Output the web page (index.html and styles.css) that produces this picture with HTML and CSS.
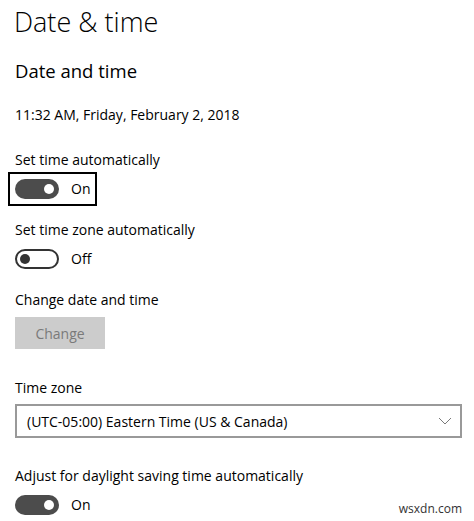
FILE: index.html
```html
<!DOCTYPE html>
<html lang="en">
<head>
    <meta charset="UTF-8">
    <meta name="viewport" content="width=device-width, initial-scale=1.0">
    <title>Date &amp; time</title>
    <link rel="stylesheet" href="styles.css">
</head>
<body>
    <div class="page">
        <h1>Date &amp; time</h1>
        <h2>Date and time</h2>

        <p class="now">11:32 AM, Friday, February 2, 2018</p>

        <div class="setting first">
            <p class="label">Set time automatically</p>
            <div class="toggle-row focused">
                <div class="toggle on"><span class="knob"></span></div>
                <span class="state">On</span>
            </div>
        </div>

        <div class="setting">
            <p class="label">Set time zone automatically</p>
            <div class="toggle-row">
                <div class="toggle off"><span class="knob"></span></div>
                <span class="state">Off</span>
            </div>
        </div>

        <div class="setting">
            <p class="label">Change date and time</p>
            <button class="btn" disabled>Change</button>
        </div>

        <div class="setting zone">
            <p class="label">Time zone</p>
            <div class="select">
                <span>(UTC-05:00) Eastern Time (US &amp; Canada)</span>
                <svg class="chevron" width="14" height="8" viewBox="0 0 14 8">
                    <path d="M1 1 L7 7 L13 1" fill="none" stroke="#7a7a7a" stroke-width="1"/>
                </svg>
            </div>
        </div>

        <div class="setting dst">
            <p class="label">Adjust for daylight saving time automatically</p>
            <div class="toggle-row">
                <div class="toggle on"><span class="knob"></span></div>
                <span class="state">On</span>
            </div>
        </div>
    </div>
    <div class="watermark">wsxdn.com</div>
</body>
</html>
```

FILE: styles.css
```css
body {
    margin: 0;
    padding: 0;
    background: #fff;
    color: #000;
    font-family: "Open Sans", "Noto Sans", sans-serif;
    overflow: hidden;
}

.page {
    padding: 0 12px 0 15px;
}

h1 {
    font-size: 27px;
    font-weight: 300;
    line-height: 40px;
    margin: 2px 0 0 -1px;
}

h2 {
    font-size: 18.5px;
    font-weight: 400;
    line-height: 28px;
    margin: 15px 0 0 0;
}

p {
    margin: 0;
}

.now {
    font-size: 14px;
    line-height: 20px;
    margin-top: 20px;
}

.setting {
    margin-top: 21px;
}

.setting.first {
    margin-top: 25px;
}

.setting.zone {
    margin-top: 29px;
}

.setting.dst {
    margin-top: 28px;
}

.label {
    font-size: 14px;
    line-height: 20px;
}

.toggle-row {
    display: flex;
    align-items: center;
    margin-top: 9px;
}

.toggle-row.focused {
    width: fit-content;
    outline: 2px solid #000;
    outline-offset: 5px;
}

.toggle {
    width: 44px;
    height: 20px;
    border-radius: 10px;
    box-sizing: border-box;
    position: relative;
}

.toggle.on {
    background: #4c4c4c;
}

.toggle.off {
    border: 2px solid #333;
}

.knob {
    position: absolute;
    width: 10px;
    height: 10px;
    border-radius: 50%;
    top: 5px;
}

.toggle.on .knob {
    background: #fff;
    right: 5px;
}

.toggle.off .knob {
    background: #333;
    left: 3px;
    top: 3px;
}

.state {
    font-size: 14px;
    line-height: 20px;
    margin-left: 12px;
}

.btn {
    display: block;
    margin-top: 7px;
    width: 90px;
    height: 32px;
    border: none;
    background: #cccccc;
    color: #7a7a7a;
    font-family: inherit;
    font-size: 14px;
    padding: 0;
}

.select {
    display: flex;
    align-items: center;
    justify-content: space-between;
    height: 34px;
    box-sizing: border-box;
    border: 2px solid #999;
    margin-top: 6px;
    padding: 0 8px 0 10px;
    font-size: 14px;
}

.chevron {
    display: block;
}

.watermark {
    position: absolute;
    right: 12px;
    bottom: 4px;
    font-size: 12px;
    color: #333;
}
```
